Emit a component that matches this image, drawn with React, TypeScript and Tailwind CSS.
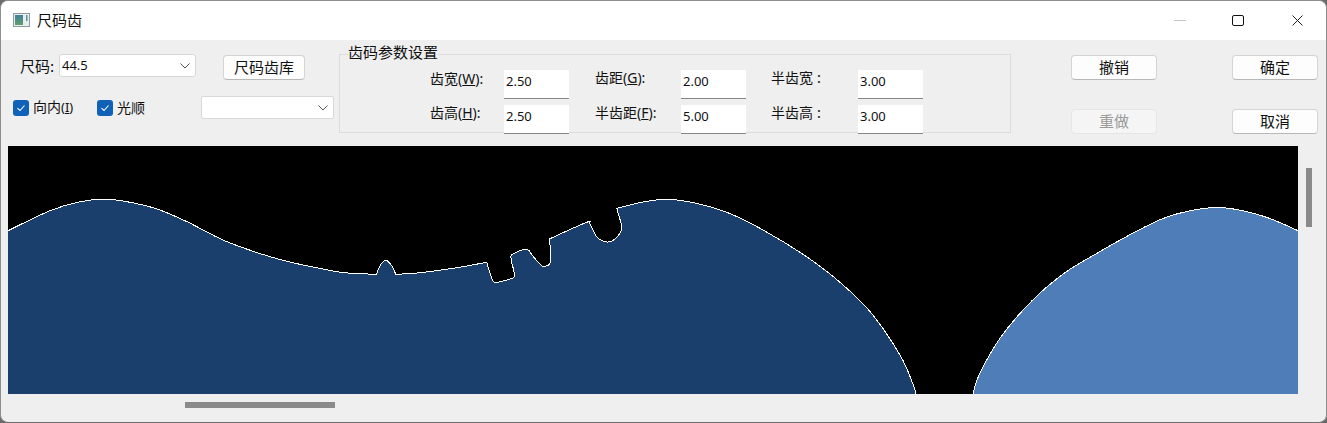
import React from "react";

type Pt = [number, number];

// smooth line through points, corners are made by starting a new run
function smooth(pts: Pt[]) {
  let d = "";
  for (let i = 0; i < pts.length - 1; i++) {
    const p0 = pts[Math.max(i - 1, 0)];
    const p1 = pts[i];
    const p2 = pts[i + 1];
    const p3 = pts[Math.min(i + 2, pts.length - 1)];
    const c1x = p1[0] + (p2[0] - p0[0]) / 6;
    const c1y = p1[1] + (p2[1] - p0[1]) / 6;
    const c2x = p2[0] - (p3[0] - p1[0]) / 6;
    const c2y = p2[1] - (p3[1] - p1[1]) / 6;
    d += `C${c1x} ${c1y} ${c2x} ${c2y} ${p2[0]} ${p2[1]}`;
  }
  return d;
}

const runs: Pt[][] = [
  [[5, 232.2], [50, 210.7], [80, 201.7], [105, 199.3], [127, 201.7], [157, 209], [187, 221.7], [227, 241.7], [280, 259.5], [333, 271], [353, 273.3], [376.7, 274.3]],
  [[376.7, 274.3], [380, 265.7], [386, 260.3], [392.3, 266.7], [395.7, 274.3]],
  [[395.7, 274.3], [420, 272.7], [456.7, 267.7], [486.7, 262.3]],
  [[486.7, 262.3], [490.7, 275], [494, 282.3], [503.3, 281], [513.3, 277.7], [514.3, 273.3], [511, 258.3], [513.3, 254], [526.7, 249.3], [533.3, 256.7], [541.7, 265.7], [546, 266], [550, 263.3], [550.7, 253.3], [549.3, 239]],
  [[549.3, 239], [586.7, 222.3], [590, 224.3], [596.7, 236.7], [603.3, 241.3], [611.7, 241.3], [619.3, 234.3], [621.7, 226.7], [616.7, 208.3]],
  [[616.7, 208.3], [643.3, 202], [666.7, 199.3], [693.3, 202.7], [726.7, 212.3], [760, 228.3], [803.3, 254.5], [836.7, 279.5], [870, 311.5], [900, 355], [913.3, 385], [916.5, 397]],
];

const rightRun: Pt[] = [[972.5, 397], [978.3, 376.7], [1000, 338.3], [1031.7, 301], [1065, 272.7], [1098.3, 252.5], [1135, 232], [1163, 218.5], [1190, 210.7], [1216.7, 207.5], [1243, 210.7], [1270, 218.5], [1302, 232.5]];

const mainPath = "M5 232.2" + runs.map(smooth).join("") + "L5 397Z";
const rightPath = "M972.5 397" + smooth(rightRun) + "L1302 397Z";

function Chevron() {
  return (
    <svg width="12" height="8" viewBox="0 0 12 8" fill="none" stroke="#555" strokeWidth="1">
      <path d="M1.5 1.5 6 6l4.5-4.5" />
    </svg>
  );
}

function Check({ label, hot, className }: { label: string; hot?: string; className?: string }) {
  return (
    <div className={"flex items-center " + (className ?? "")}>
      <div className="flex h-4 w-4 items-center justify-center rounded-[3px] bg-[#0f62b8]">
        <svg width="10" height="10" viewBox="0 0 10 10" fill="none" stroke="#fff" strokeWidth="1.1">
          <path d="M1.5 5.2 4 7.5l4.5-5" />
        </svg>
      </div>
      <span className="ml-[4px] mt-[-2px] text-[14px] leading-none">
        {label}
        {hot && (
          <span className="font-['Noto_Sans'] text-[13px]">
            (<u>{hot}</u>)
          </span>
        )}
      </span>
    </div>
  );
}

function Btn({ label, disabled, className }: { label: string; disabled?: boolean; className?: string }) {
  return (
    <button
      className={
        "flex h-[25px] w-[86px] items-center justify-center rounded-[4px] border text-[15px] " +
        (disabled
          ? "border-[#e6e6e6] bg-[#f5f5f5] text-[#9a9a9a] "
          : "border-[#d4d4d4] border-b-[#b8b8b8] bg-[#fdfdfd] text-[#111] ") +
        (className ?? "")
      }
    >
      {label}
    </button>
  );
}

function Field({ value }: { value: string }) {
  return (
    <div className="flex h-[29px] w-[65px] items-center border-b border-b-[#868686] bg-white pb-[4px] pl-[2px] font-['Noto_Sans'] text-[13px] text-[#111]">
      {value}
    </div>
  );
}

function Label({ cn, hot }: { cn: string; hot?: string }) {
  return (
    <div className="text-[14px] leading-none">
      {cn}
      {hot ? (
        <span className="font-['Noto_Sans'] text-[14px]">
          (<u>{hot}</u>):
        </span>
      ) : (
        <span className="ml-[4px]">:</span>
      )}
    </div>
  );
}

function ParamRow({ items, firstTop }: { items: { cn: string; hot?: string; value: string }[]; firstTop: string }) {
  return (
    <div className="flex">
      <div className={"w-[74px] " + firstTop}>
        <Label cn={items[0].cn} hot={items[0].hot} />
      </div>
      <Field value={items[0].value} />
      <div className="ml-[26px] w-[86px]">
        <Label cn={items[1].cn} hot={items[1].hot} />
      </div>
      <Field value={items[1].value} />
      <div className="ml-[25px] w-[87px]">
        <Label cn={items[2].cn} hot={items[2].hot} />
      </div>
      <Field value={items[2].value} />
    </div>
  );
}

export default function App() {
  return (
    <div className="h-[423px] w-[1327px] bg-[#6a6a6a]">
      <div
        className="flex h-[423px] w-[1327px] flex-col overflow-hidden rounded-[8px] border border-[#8e8e8e] border-b-[#6f6f6f] bg-[#efefef] text-[#111]"
        style={{ fontFamily: '"Noto Sans CJK SC", "Noto Sans", sans-serif' }}
      >
        {/* title bar */}
        <div className="flex h-[39px] shrink-0 items-center bg-white pl-[12px]">
          <svg width="17" height="14" viewBox="0 0 17 14" className="mt-[-2px]">
            <defs>
              <linearGradient id="ic" x1="0" y1="0" x2="0" y2="1">
                <stop offset="0" stopColor="#3f7f9a" />
                <stop offset="1" stopColor="#5fa06a" />
              </linearGradient>
            </defs>
            <rect x="0.5" y="0.5" width="16" height="13" fill="#e9eef0" stroke="#8f9a9f" />
            <rect x="2" y="2" width="8" height="10" fill="url(#ic)" />
            <rect x="13" y="2" width="1.5" height="6" fill="#5f8f98" />
          </svg>
          <span className="ml-[7px] text-[15px]">尺码齿</span>
          <div className="ml-auto flex h-full items-center">
            <div className="h-px w-[12px] bg-[#c4c4c4]" />
            <div className="ml-[46px] h-[11px] w-[12px] rounded-[2px] border-[1.5px] border-[#111]" />
            <svg width="11" height="11" viewBox="0 0 11 11" fill="none" stroke="#222" strokeWidth="1" className="ml-[48px] mr-[23px]">
              <path d="M.5.5l10 10M10.5.5l-10 10" />
            </svg>
          </div>
        </div>

        {/* toolbar */}
        <div className="flex h-[106px] shrink-0 items-start">
          <div className="w-[338px] shrink-0">
            <div className="mt-[14px] flex items-start pl-[19px]">
              <span className="mt-[4px] w-[39px] text-[15px] leading-none">尺码:</span>
              <div className="flex h-[23px] w-[137px] items-center justify-between rounded-[3px] border border-[#d8d8d8] bg-white pl-[2px] pr-[4px] font-['Noto_Sans'] text-[13px]">
                44.5
                <Chevron />
              </div>
              <Btn label="尺码齿库" className="ml-[27px] mt-[1px] !w-[82px]" />
            </div>
            <div className="mt-[16px] flex items-center pl-[12px]">
              <Check label="向内" hot="I" className="w-[84px]" />
              <Check label="光顺" className="w-[104px]" />
              <div className="flex h-[23px] w-[133px] items-center justify-end rounded-[2px] border border-[#d8d8d8] bg-white pr-[4px]">
                <Chevron />
              </div>
            </div>
          </div>

          <div className="relative mt-[14px] flex h-[79px] w-[672px] shrink-0 flex-col gap-[6px] border border-[#dcdcdc] pl-[90px] pt-[15px]">
            <span className="absolute left-[8px] top-[-11px] bg-[#efefef] text-[15px] leading-[16px]">齿码参数设置</span>
            <ParamRow
              firstTop="pt-[1px]"
              items={[
                { cn: "齿宽", hot: "W", value: "2.50" },
                { cn: "齿距", hot: "G", value: "2.00" },
                { cn: "半齿宽", value: "3.00" },
              ]}
            />
            <ParamRow
              firstTop="pt-0"
              items={[
                { cn: "齿高", hot: "H", value: "2.50" },
                { cn: "半齿距", hot: "F", value: "5.00" },
                { cn: "半齿高", value: "3.00" },
              ]}
            />
          </div>

          <div className="ml-[60px] mt-[15px] flex flex-col gap-[29px]">
            <Btn label="撤销" />
            <Btn label="重做" disabled />
          </div>
          <div className="ml-[75px] mt-[15px] flex flex-col gap-[29px]">
            <Btn label="确定" />
            <Btn label="取消" />
          </div>
        </div>

        {/* canvas + scrollbars */}
        <div className="flex flex-1 flex-col">
          <div className="flex">
            <div className="ml-[7px] h-[248px] w-[1290px] shrink-0 bg-black">
              <svg width="1290" height="248" viewBox="8 146 1290 248" className="block" shapeRendering="crispEdges">
                <path d={mainPath} fill="#1b3f6c" stroke="#fff" strokeWidth="1" />
                <path d={rightPath} fill="#4e7db8" stroke="#fff" strokeWidth="1" />
              </svg>
            </div>
            <div className="ml-[8px] mt-[22px] h-[59px] w-[6px] bg-[#8a8a8a]" />
          </div>
          <div className="ml-[184px] mt-[8px] h-[6px] w-[150px] bg-[#8a8a8a]" />
        </div>
      </div>
    </div>
  );
}
